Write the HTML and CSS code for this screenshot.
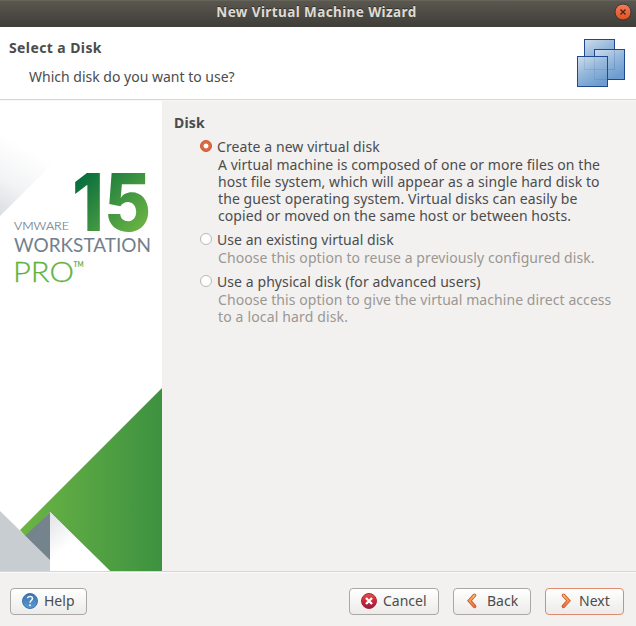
FILE: index.html
```html
<!DOCTYPE html>
<html lang="en">
<head>
<meta charset="utf-8">
<title>New Virtual Machine Wizard</title>
<link rel="stylesheet" href="styles.css">
</head>
<body>
<div class="window">
  <header class="titlebar">
    <h1>New Virtual Machine Wizard</h1>
    <button class="close" aria-label="Close"><svg width="18" height="18" viewBox="0 0 18 18"><circle cx="9" cy="9" r="8" fill="url(#closeFill)" stroke="#3b3832"/><path d="M6.5 6.5l5 5M11.5 6.5l-5 5" stroke="#4a261a" stroke-width="1.4"/><defs><linearGradient id="closeFill" x2="0" y2="1"><stop stop-color="#f37e5c"/><stop offset="1" stop-color="#e4501f"/></linearGradient></defs></svg></button>
  </header>
  <section class="heading">
    <div>
      <h2>Select a Disk</h2>
      <p>Which disk do you want to use?</p>
    </div>
    <svg width="50" height="50" viewBox="0 0 50 50">
      <defs><linearGradient id="pane" x2=".55" y2="1"><stop stop-color="#cfdeec"/><stop offset=".5" stop-color="#98b9dc"/><stop offset="1" stop-color="#6d9dd0"/></linearGradient></defs>
      <g fill="url(#pane)" stroke="#20498b">
        <rect x="8.5" y="1.5" width="30" height="30"/>
        <rect x="18.5" y="11.5" width="30" height="30"/>
        <path d="M19 31.5H38.5V12" fill="none" stroke-opacity=".2"/>
        <rect x="1.5" y="18.5" width="30" height="30"/>
        <path d="M8.5 19V31.5H31M18.5 19V41.5H31" fill="none" stroke-opacity=".12"/>
      </g>
    </svg>
  </section>
  <main class="content">
    <svg class="artwork" width="162" height="470" viewBox="0 0 162 470">
      <defs>
        <linearGradient id="fold" gradientUnits="userSpaceOnUse" x1="-5" y1="115" x2="32" y2="50"><stop stop-color="#d9dbdf"/><stop offset=".5" stop-color="#f3f4f5"/><stop offset="1" stop-color="#fff"/></linearGradient>
        <linearGradient id="slope" gradientUnits="userSpaceOnUse" x1="20" y1="0" x2="162" y2="0"><stop stop-color="#6cb545"/><stop offset="1" stop-color="#3d9140"/></linearGradient>
        <linearGradient id="peak" gradientUnits="userSpaceOnUse" x1="50" y1="415" x2="72" y2="441"><stop stop-color="#e3e4e8"/><stop offset="1" stop-color="#fff"/></linearGradient>
        <linearGradient id="number" gradientUnits="userSpaceOnUse" x1="80" y1="72" x2="144" y2="132"><stop stop-color="#046b3c"/><stop offset="1" stop-color="#70b744"/></linearGradient>
      </defs>
      <rect width="162" height="470" fill="#fff"/>
      <path d="M0 0H116L0 115Z" fill="url(#fold)"/>
      <path d="M162 287V470H110L50 411L26 436L20 429Z" fill="url(#slope)"/>
      <path d="M50 411L110 470H50Z" fill="url(#peak)"/>
      <path d="M50 411V460L25 435Z" fill="#75838d"/>
      <path d="M0 410L50 459V470H0Z" fill="#c8cdd1"/>
      <text class="art-number" x="72" y="129.5" textLength="79" lengthAdjust="spacingAndGlyphs">15</text>
      <text class="art-vendor" x="14" y="129" textLength="55" lengthAdjust="spacingAndGlyphs">VMWARE</text>
      <text class="art-product" x="14" y="151" textLength="137" lengthAdjust="spacingAndGlyphs">WORKSTATION</text>
      <text class="art-edition" x="13" y="181" textLength="61" lengthAdjust="spacingAndGlyphs">PRO</text>
      <text class="art-mark" x="73.5" y="166" textLength="10" lengthAdjust="spacingAndGlyphs">TM</text>
    </svg>
    <section class="options">
      <h3>Disk</h3>
      <div class="option">
        <div class="choice"><i class="radio on"></i><span class="t1">Create a new virtual disk</span></div>
        <p><span class="d1">A virtual machine is composed of one or more files on the</span><span class="d1">host file system, which will appear as a single hard disk to</span><span class="d3">the guest operating system. Virtual disks can easily be</span><span class="d4">copied or moved on the same host or between hosts.</span></p>
      </div>
      <div class="option muted">
        <div class="choice"><i class="radio"></i><span class="t2">Use an existing virtual disk</span></div>
        <p><span class="d3">Choose this option to reuse a previously configured disk.</span></p>
      </div>
      <div class="option muted">
        <div class="choice"><i class="radio"></i><span class="t1">Use a physical disk (for advanced users)</span></div>
        <p><span class="d4">Choose this option to give the virtual machine direct access</span><span class="d7">to a local hard disk.</span></p>
      </div>
    </section>
  </main>
  <footer class="actions">
    <button class="btn help"><svg width="16" height="16" viewBox="0 0 16 16"><defs><linearGradient id="blue" x2="0" y2="1"><stop stop-color="#3a72ae"/><stop offset="1" stop-color="#5b9bd0"/></linearGradient></defs><circle cx="8" cy="8" r="7.5" fill="url(#blue)" stroke="#3d74aa"/><path d="M5.5 5.3C5.7 2.8 10.5 2.7 10.5 5.5C10.5 7.4 8 7.5 8 9.8" fill="none" stroke="#eef4fa" stroke-width="1.5"/><circle cx="8" cy="12.2" r="1" fill="#eef4fa"/></svg><span>Help</span></button>
    <button class="btn cancel"><svg width="16" height="16" viewBox="0 0 16 16"><defs><linearGradient id="red" x2="0" y2="1"><stop stop-color="#e4514b"/><stop offset=".5" stop-color="#cf2635"/><stop offset="1" stop-color="#8f1c46"/></linearGradient></defs><circle cx="8" cy="8" r="7.5" fill="url(#red)" stroke="#a72a3c"/><path d="M5 5l6 6M11 5l-6 6" stroke="#fff" stroke-width="2.4"/></svg><span>Cancel</span></button>
    <button class="btn back"><svg width="16" height="16" viewBox="0 0 16 16"><defs><linearGradient id="orange" gradientUnits="userSpaceOnUse" x1="0" y1="1" x2="0" y2="15"><stop stop-color="#fbc678"/><stop offset="1" stop-color="#ef6738"/></linearGradient></defs><path d="M9.5 2.3L4.500 7.800l5 5.500" fill="none" stroke="#cf5b2a" stroke-width="3.6" stroke-linecap="round"/><path d="M9.500 2.300L4.500 7.800l5 5.500" fill="none" stroke="url(#orange)" stroke-width="1.8" stroke-linecap="round"/></svg><span>Back</span></button>
    <button class="btn next"><svg width="16" height="16" viewBox="0 0 16 16"><path d="M6.500 2.300L11.500 7.800l-5 5.500" fill="none" stroke="#cf5b2a" stroke-width="3.6" stroke-linecap="round"/><path d="M6.500 2.300L11.500 7.800l-5 5.500" fill="none" stroke="url(#orange)" stroke-width="1.8" stroke-linecap="round"/></svg><span>Next</span></button>
  </footer>
</div>
</body>
</html>
```
FILE: styles.css
```css
* { box-sizing: border-box; }
body { margin: 0; font: 14px/17px "Noto Sans", sans-serif; color: #4c4c4c; background: #f2f1f0; }
h1, h2, h3, p { margin: 0; font-size: 14px; }
button { font: inherit; color: inherit; }
.window { width: 636px; height: 626px; display: flex; flex-direction: column; overflow: hidden; white-space: nowrap; }
.titlebar { height: 27px; flex: none; display: grid; grid-template-columns: 22px 1fr 22px; align-items: center; background: linear-gradient(#5a574f, #3f3d38); border-top: 1px solid #66635b; }
.titlebar h1 { grid-column: 2; text-align: center; color: #dfdbd2; font-size: 13.5px; letter-spacing: .4px; line-height: 20px; padding: 0 3px 4px 0; text-shadow: 0 -1px #33312d; }
.close { width: 18px; height: 18px; padding: 0; border: 0; background: none; margin-bottom: 5px; }
.close svg { display: block; }
.heading { height: 74px; flex: none; display: flex; justify-content: space-between; padding: 11px 10px 0 9px; background: linear-gradient(#fff 72px, #d7d6d4 72px 73px, #f8f7f6 73px); }
.heading h2 { line-height: 20px; letter-spacing: .4px; }
.heading p { line-height: 20px; margin: 9px 0 0 20px; }
.content { height: 470px; flex: none; display: flex; }
.artwork { flex: none; display: block; }
.art-number { font: 800 80px Inter, sans-serif; fill: url(#number); }
.art-vendor { font: 300 12.5px Lato, sans-serif; fill: #6f7d88; stroke: #6f7d88; stroke-width: .2px; }
.art-product { font: 400 18.5px Lato, sans-serif; fill: #73808b; }
.art-edition { font: 300 28px Lato, sans-serif; fill: #62b33d; stroke: #62b33d; stroke-width: .3px; }
.art-mark { font: 700 7px Lato, sans-serif; fill: #62b33d; }
.options { padding: 13px 0 0 12px; }
.options h3 { line-height: 18px; margin-bottom: 5px; letter-spacing: .15px; }
.option { padding-left: 26px; margin-bottom: 6px; }
.choice { display: flex; align-items: center; gap: 5px; height: 19px; }
.radio { width: 12px; height: 12px; border: 1px solid #b9b6b3; border-radius: 50%; background: #fff; margin-bottom: 2px; }
.radio.on { border-color: #c8562e; background: radial-gradient(circle, #fff 0 2px, #dc6b43 2.8px); }
.option p { padding-left: 18px; }
.option p span { display: block; height: 17px; width: max-content; }
.muted p { color: #9b9792; }
.t1 { letter-spacing: .08px; }
.t2 { letter-spacing: .05px; }
.d1 { letter-spacing: .055px; }
.d3 { letter-spacing: .085px; }
.d4 { letter-spacing: .07px; }
.d7 { letter-spacing: .15px; }
.actions { flex: none; height: 55px; display: flex; align-items: flex-start; padding: 16px 12px 0 10px; border-top: 1px solid #d7d6d4; box-shadow: inset 0 1px #fafafa; }
.btn { height: 27px; display: flex; align-items: center; gap: 7px; padding: 0 0 0 11px; border: 1px solid #aaa8a4; border-radius: 4px; background: linear-gradient(#fff, #ecebe9); }
.btn svg { flex: none; margin-bottom: 2px; }
.btn span { padding-bottom: 2px; }
.help { width: 77px; gap: 6px; margin-right: auto; }
.cancel { width: 90px; margin-right: 14px; }
.cancel span { padding-left: 0; margin-left: -1px; }
.back { width: 78px; margin-right: 14px; }
.back span { margin-left: -1px; }
.next { width: 79px; border-color: #dd8a6e; }
.next span { margin-left: -1px; }
```
